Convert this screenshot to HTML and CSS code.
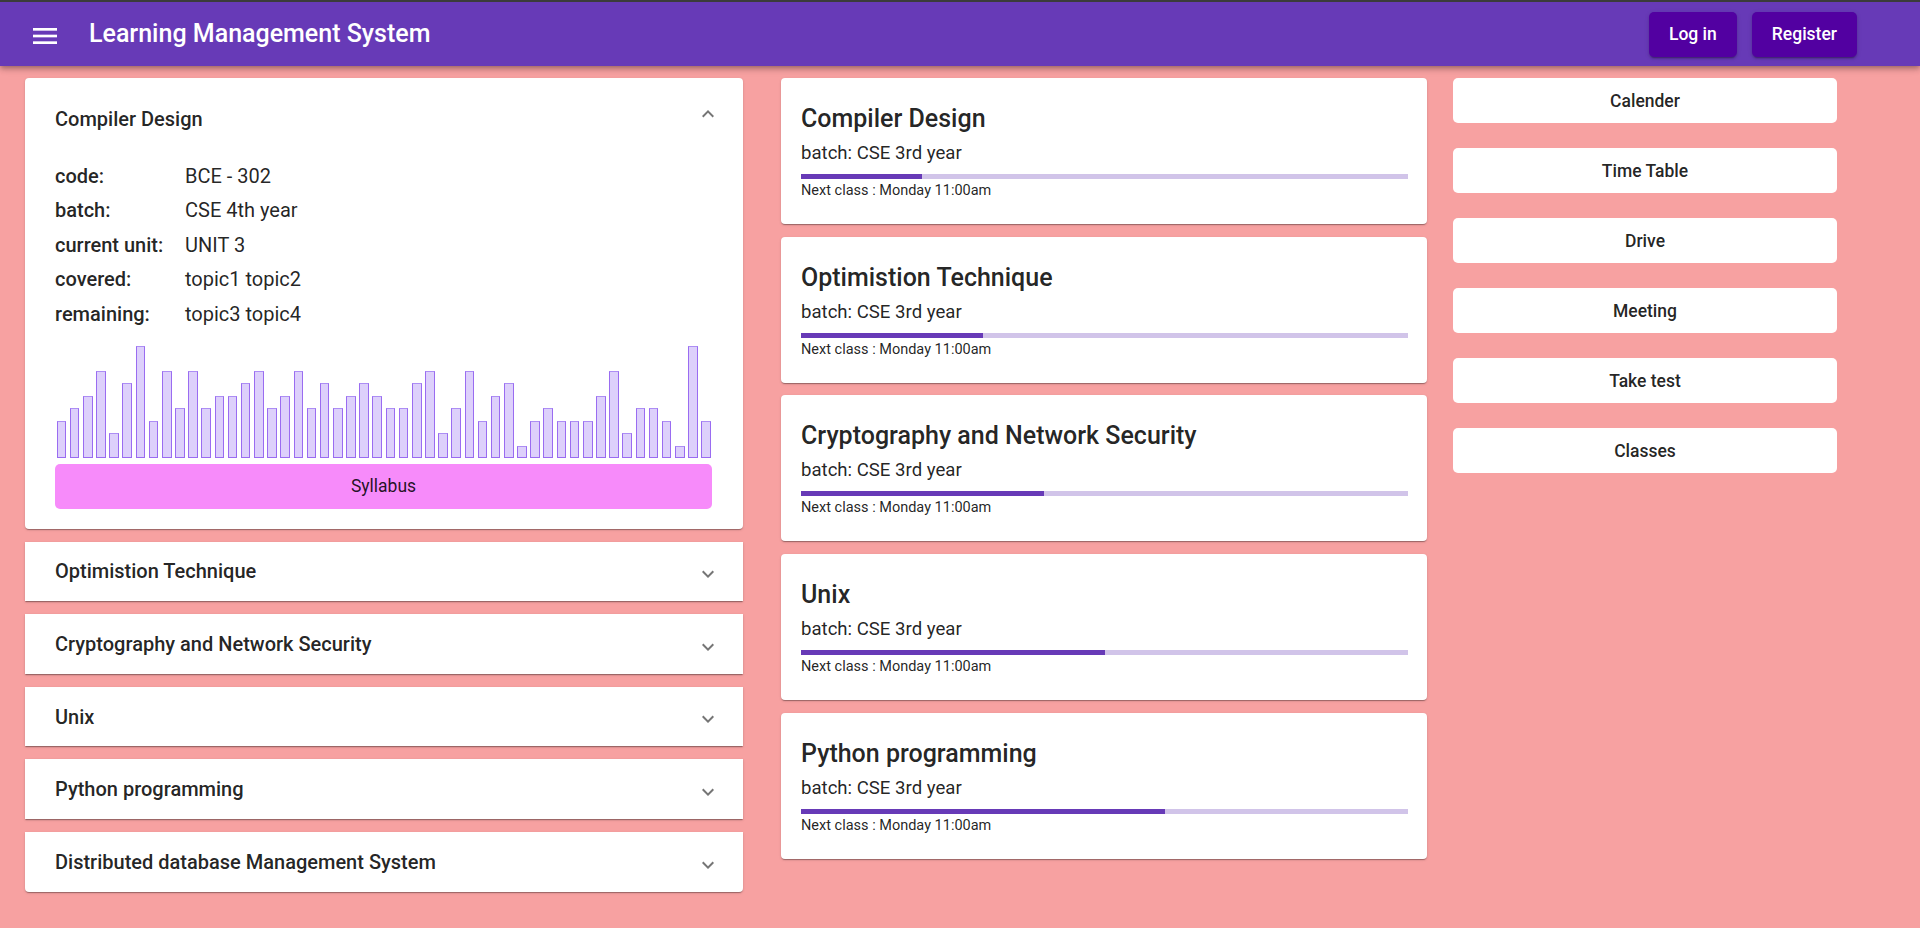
FILE: index.html
```html
<!DOCTYPE html>
<html lang="en">
<head>
<meta charset="utf-8">
<title>Learning Management System</title>
<link rel="stylesheet" href="styles.css">
</head>
<body>
<header class="appbar">
  <svg class="menu-icon" viewBox="0 0 24 16" aria-hidden="true">
    <rect x="0" y="0" width="24" height="2.67" fill="#fff"/>
    <rect x="0" y="6.67" width="24" height="2.67" fill="#fff"/>
    <rect x="0" y="13.33" width="24" height="2.67" fill="#fff"/>
  </svg>
  <h1 class="app-title">Learning Management System</h1>
  <div class="auth">
    <button class="auth-btn">Log in</button>
    <button class="auth-btn">Register</button>
  </div>
</header>

<main class="main">
  <section class="accordion">
    <div class="acc acc-open">
      <div class="acc-summary-open">
        <span class="acc-title acc-title-open">Compiler Design</span>
        <svg class="chev" viewBox="0 0 24 24"><path d="M12 8l-6 6 1.41 1.41L12 10.83l4.59 4.58L18 14z"/></svg>
      </div>
      <div class="acc-details">
        <div class="info">
          <span class="info-label">code:</span><span class="info-value">BCE - 302</span>
          <span class="info-label">batch:</span><span class="info-value">CSE 4th year</span>
          <span class="info-label">current unit:</span><span class="info-value">UNIT 3</span>
          <span class="info-label">covered:</span><span class="info-value">topic1 topic2</span>
          <span class="info-label">remaining:</span><span class="info-value">topic3 topic4</span>
        </div>
        <div class="chart">
          <div class="bar" style="height:37.44px"></div>
          <div class="bar" style="height:49.92px"></div>
          <div class="bar" style="height:62.4px"></div>
          <div class="bar" style="height:87.36px"></div>
          <div class="bar" style="height:24.96px"></div>
          <div class="bar" style="height:74.88px"></div>
          <div class="bar" style="height:112.32px"></div>
          <div class="bar" style="height:37.44px"></div>
          <div class="bar" style="height:87.36px"></div>
          <div class="bar" style="height:49.92px"></div>
          <div class="bar" style="height:87.36px"></div>
          <div class="bar" style="height:49.92px"></div>
          <div class="bar" style="height:62.4px"></div>
          <div class="bar" style="height:62.4px"></div>
          <div class="bar" style="height:74.88px"></div>
          <div class="bar" style="height:87.36px"></div>
          <div class="bar" style="height:49.92px"></div>
          <div class="bar" style="height:62.4px"></div>
          <div class="bar" style="height:87.36px"></div>
          <div class="bar" style="height:49.92px"></div>
          <div class="bar" style="height:74.88px"></div>
          <div class="bar" style="height:49.92px"></div>
          <div class="bar" style="height:62.4px"></div>
          <div class="bar" style="height:74.88px"></div>
          <div class="bar" style="height:62.4px"></div>
          <div class="bar" style="height:49.92px"></div>
          <div class="bar" style="height:49.92px"></div>
          <div class="bar" style="height:74.88px"></div>
          <div class="bar" style="height:87.36px"></div>
          <div class="bar" style="height:24.96px"></div>
          <div class="bar" style="height:49.92px"></div>
          <div class="bar" style="height:87.36px"></div>
          <div class="bar" style="height:37.44px"></div>
          <div class="bar" style="height:62.4px"></div>
          <div class="bar" style="height:74.88px"></div>
          <div class="bar" style="height:12.48px"></div>
          <div class="bar" style="height:37.44px"></div>
          <div class="bar" style="height:49.92px"></div>
          <div class="bar" style="height:37.44px"></div>
          <div class="bar" style="height:37.44px"></div>
          <div class="bar" style="height:37.44px"></div>
          <div class="bar" style="height:62.4px"></div>
          <div class="bar" style="height:87.36px"></div>
          <div class="bar" style="height:24.96px"></div>
          <div class="bar" style="height:49.92px"></div>
          <div class="bar" style="height:49.92px"></div>
          <div class="bar" style="height:37.44px"></div>
          <div class="bar" style="height:12.48px"></div>
          <div class="bar" style="height:112.32px"></div>
          <div class="bar" style="height:37.44px"></div>
        </div>
        <button class="syllabus-btn">Syllabus</button>
      </div>
    </div>

    <div class="acc">
      <div class="acc-summary">
        <span class="acc-title">Optimistion Technique</span>
        <svg class="chev chev-down" viewBox="0 0 24 24"><path d="M16.59 8.59L12 13.17 7.41 8.59 6 10l6 6 6-6z"/></svg>
      </div>
    </div>
    <div class="acc">
      <div class="acc-summary">
        <span class="acc-title">Cryptography and Network Security</span>
        <svg class="chev chev-down" viewBox="0 0 24 24"><path d="M16.59 8.59L12 13.17 7.41 8.59 6 10l6 6 6-6z"/></svg>
      </div>
    </div>
    <div class="acc">
      <div class="acc-summary">
        <span class="acc-title">Unix</span>
        <svg class="chev chev-down" viewBox="0 0 24 24"><path d="M16.59 8.59L12 13.17 7.41 8.59 6 10l6 6 6-6z"/></svg>
      </div>
    </div>
    <div class="acc">
      <div class="acc-summary">
        <span class="acc-title">Python programming</span>
        <svg class="chev chev-down" viewBox="0 0 24 24"><path d="M16.59 8.59L12 13.17 7.41 8.59 6 10l6 6 6-6z"/></svg>
      </div>
    </div>
    <div class="acc acc-last">
      <div class="acc-summary">
        <span class="acc-title">Distributed database Management System</span>
        <svg class="chev chev-down" viewBox="0 0 24 24"><path d="M16.59 8.59L12 13.17 7.41 8.59 6 10l6 6 6-6z"/></svg>
      </div>
    </div>
  </section>

  <section class="courses">
    <article class="course">
      <h2 class="course-title">Compiler Design</h2>
      <p class="course-batch">batch: CSE 3rd year</p>
      <div class="progress"><div class="progress-fill" style="width:20%"></div></div>
      <p class="course-next">Next class : Monday 11:00am</p>
    </article>
    <article class="course">
      <h2 class="course-title">Optimistion Technique</h2>
      <p class="course-batch">batch: CSE 3rd year</p>
      <div class="progress"><div class="progress-fill" style="width:30%"></div></div>
      <p class="course-next">Next class : Monday 11:00am</p>
    </article>
    <article class="course">
      <h2 class="course-title">Cryptography and Network Security</h2>
      <p class="course-batch">batch: CSE 3rd year</p>
      <div class="progress"><div class="progress-fill" style="width:40%"></div></div>
      <p class="course-next">Next class : Monday 11:00am</p>
    </article>
    <article class="course">
      <h2 class="course-title">Unix</h2>
      <p class="course-batch">batch: CSE 3rd year</p>
      <div class="progress"><div class="progress-fill" style="width:50%"></div></div>
      <p class="course-next">Next class : Monday 11:00am</p>
    </article>
    <article class="course">
      <h2 class="course-title">Python programming</h2>
      <p class="course-batch">batch: CSE 3rd year</p>
      <div class="progress"><div class="progress-fill" style="width:60%"></div></div>
      <p class="course-next">Next class : Monday 11:00am</p>
    </article>
  </section>

  <nav class="side">
    <button class="side-btn">Calender</button>
    <button class="side-btn">Time Table</button>
    <button class="side-btn">Drive</button>
    <button class="side-btn">Meeting</button>
    <button class="side-btn">Take test</button>
    <button class="side-btn">Classes</button>
  </nav>
</main>
</body>
</html>
```

FILE: styles.css
```css
* { box-sizing: border-box; }

html, body { height: 100%; }

body {
  margin: 0;
  background: #f7a1a1;
  font-family: Roboto, "Noto Sans", "Liberation Sans", sans-serif;
  color: rgba(0, 0, 0, 0.87);
  border-top: 2px solid #3b3b3b;
}

/* App bar */
.appbar {
  position: relative;
  z-index: 1;
  height: 64px;
  background: #673ab7;
  color: #fff;
  display: flex;
  align-items: center;
  padding: 0 63px 0 33px;
  box-shadow: 0 2px 4px -1px rgba(0,0,0,.2), 0 4px 5px 0 rgba(0,0,0,.14), 0 1px 10px 0 rgba(0,0,0,.12);
}

.menu-icon {
  display: block;
  width: 24px;
  height: 16px;
  margin-top: 4px;
}

.app-title {
  flex: 1;
  margin: 0 0 0 32px;
  font-size: 25px;
  font-weight: 500;
  line-height: 32px;
}

.auth {
  display: flex;
  gap: 15px;
}

.auth-btn {
  height: 45px;
  padding: 0 20px;
  border: 0;
  border-radius: 5px;
  background: #5200a1;
  color: #fff;
  font-family: inherit;
  font-size: 17.5px;
  font-weight: 500;
  box-shadow: 0 3px 1px -2px rgba(0,0,0,.2), 0 2px 2px 0 rgba(0,0,0,.14), 0 1px 5px 0 rgba(0,0,0,.12);
}

/* Layout */
.main {
  display: flex;
  align-items: flex-start;
  padding: 12px 0 0 25px;
}

.accordion { width: 718px; }
.courses { width: 646px; margin-left: 38px; }
.side { width: 384px; margin-left: 26px; display: flex; flex-direction: column; gap: 25px; }

/* Accordion */
.acc {
  background: #fff;
  margin-top: 13px;
  box-shadow: 0 2px 1px -1px rgba(0,0,0,.2), 0 1px 1px 0 rgba(0,0,0,.14), 0 1px 3px 0 rgba(0,0,0,.12);
}
.acc-open { margin-top: 0; border-radius: 4px; }
.acc-last { border-radius: 0 0 4px 4px; }

.acc-summary-open {
  display: flex;
  align-items: flex-start;
  padding: 24px 23px 0 30px;
}

.acc-summary {
  height: 59.6px;
  display: flex;
  align-items: center;
  padding: 0 23px 0 30px;
}

.acc-title {
  flex: 1;
  font-size: 20px;
  font-weight: 500;
  line-height: 30px;
}
.acc-title-open { margin-top: 2px; }

.chev {
  width: 24px;
  height: 24px;
  fill: rgba(0, 0, 0, 0.54);
  flex: none;
}
.chev-down { margin-top: 5.4px; }

.acc-details {
  padding: 24.5px 31px 19.7px 30px;
}

.info {
  display: grid;
  grid-template-columns: 130px 1fr;
  font-size: 20px;
  line-height: 34.65px;
}
.info-label { font-weight: 500; }
.info-value { font-weight: 400; }

.chart {
  margin-top: 13.2px;
  height: 113px;
  display: flex;
  align-items: flex-end;
  padding-left: 1.7px;
}

.bar {
  flex: none;
  width: 9.6px;
  margin-right: 3.57px;
  background: #ddd0fb;
  border: 1px solid #9a6cf1;
  border-top-color: #ad8ef4;
}

.syllabus-btn {
  display: block;
  width: 100%;
  height: 45px;
  margin-top: 6px;
  border: 0;
  border-radius: 5px;
  background: #f78bfa;
  color: rgba(0, 0, 0, 0.87);
  font-family: inherit;
  font-size: 17.5px;
  font-weight: 400;
}

/* Course cards */
.course {
  background: #fff;
  border-radius: 4px;
  margin-top: 12.7px;
  padding: 25px 19px 21px 20px;
  box-shadow: 0 2px 1px -1px rgba(0,0,0,.2), 0 1px 1px 0 rgba(0,0,0,.14), 0 1px 3px 0 rgba(0,0,0,.12);
}
.course:first-child { margin-top: 0; }

.course-title {
  margin: 0 0 4px;
  font-size: 25px;
  font-weight: 500;
  line-height: 32px;
}

.course-batch {
  margin: 0;
  font-size: 18.6px;
  line-height: 28px;
}

.progress {
  margin-top: 7px;
  height: 5px;
  background: #d1c4e9;
}
.progress-fill {
  height: 100%;
  background: #673ab7;
}

.course-next {
  margin: 0;
  font-size: 14.5px;
  line-height: 24px;
}

/* Side buttons */
.side-btn {
  height: 45px;
  border: 0;
  border-radius: 5px;
  background: #fff;
  color: rgba(0, 0, 0, 0.87);
  font-family: inherit;
  font-size: 17.5px;
  font-weight: 500;
}
```
